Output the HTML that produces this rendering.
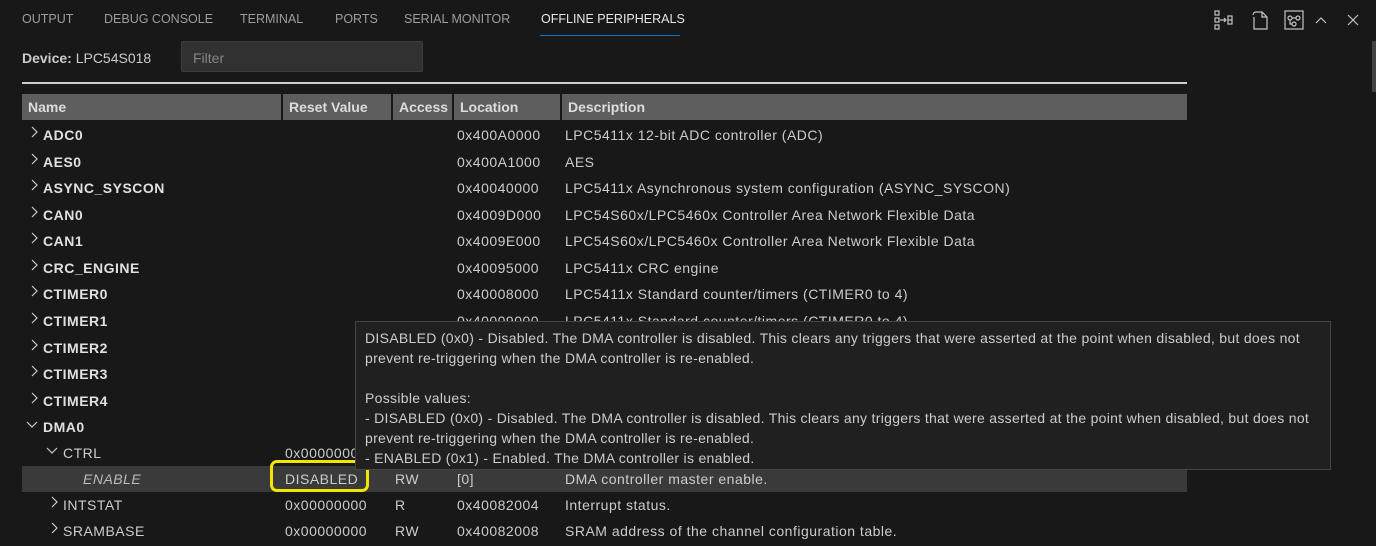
<!DOCTYPE html>
<html><head><meta charset="utf-8"><style>
body{margin:0;width:1376px;height:546px;background:#181818;color:#ccc;font-family:"Liberation Sans",sans-serif;font-size:14px;overflow:hidden;position:relative}
.tabs{position:absolute;top:0;left:0;height:38px;font-size:12.5px;color:#9d9d9d}
.tab{position:absolute;top:12px;white-space:nowrap}
.act{color:#e7e7e7}
.ul{position:absolute;left:540px;top:35px;width:140px;height:1px;background:#0078d4}
.dev{position:absolute;left:22px;top:50px;color:#ccc}
.filter{position:absolute;left:181px;top:41px;width:242px;height:31px;background:#313131;border:1px solid #3c3c3c;box-sizing:border-box;border-radius:2px;color:#868686;padding:8px 11px;font-size:14px}
.hr{position:absolute;left:22px;top:82px;width:1165px;height:2px;background:#cfcfcf}
.hdr{position:absolute;left:22px;top:94px;width:1165px;height:26px;background:#5e5e5e}
.hdr div{position:absolute;top:0;height:26px;line-height:26px;font-weight:bold;color:#ddd;border-right:2px solid #181818;padding-left:6px;box-sizing:border-box}
.row{position:absolute;left:22px;width:1165px;height:26px;line-height:26px;letter-spacing:0.5px}
.row span{position:absolute;white-space:nowrap}
.n{font-weight:bold;color:#e0e0e0}
.row svg{position:absolute;top:4px}
.tip{position:absolute;left:355px;top:321px;width:976px;height:149px;background:#202020;border:1px solid #454545;box-sizing:border-box;padding:6px 9px;line-height:20px;color:#ccc;font-size:14px;letter-spacing:0.3px}
.sb{position:absolute;left:1372px;top:41px;width:4px;height:51px;background:#424242}
</style></head><body>
<div class="tabs">
<span class="tab" style="left:22px">OUTPUT</span>
<span class="tab" style="left:104px">DEBUG CONSOLE</span>
<span class="tab" style="left:240px">TERMINAL</span>
<span class="tab" style="left:335px">PORTS</span>
<span class="tab" style="left:404px">SERIAL MONITOR</span>
<span class="tab act" style="left:541px">OFFLINE PERIPHERALS</span>
</div>
<div class="ul"></div>
<svg style="position:absolute;left:1212px;top:8px" width="160" height="24" fill="none" stroke="#c5c5c5" stroke-width="1.2">
<rect x="3" y="3" width="4" height="4"/><rect x="3" y="10" width="4" height="4"/><rect x="3" y="17" width="4" height="4"/><path d="M8 12h6M12 10l2 2-2 2"/><rect x="16" y="8" width="4" height="8"/><path d="M16 12h4"/>
<path d="M44 4h6l5 5v12H42V9"/><path d="M50 4v5h5"/><path d="M44 4a3 3 0 0 0-3 3"/>
<rect x="73" y="3" width="18" height="18"/><circle cx="78" cy="10" r="2"/><circle cx="86" cy="10" r="2"/><circle cx="82" cy="16" r="2"/><path d="M80 10h4M78 12v4h2"/>
<path d="M104 15l5-5 5 5"/>
<path d="M136 7l10 10M146 7l-10 10"/>
</svg>
<div class="sb"></div>
<div class="dev"><b>Device:</b> LPC54S018</div>
<div class="filter">Filter</div>
<div class="hr"></div>
<div class="hdr">
<div style="left:0;width:261px">Name</div>
<div style="left:261px;width:110px">Reset Value</div>
<div style="left:371px;width:61px">Access</div>
<div style="left:432px;width:108px">Location</div>
<div style="left:540px;width:625px;border:none">Description</div>
</div>
<svg width="0" height="0" style="position:absolute"><defs>
<symbol id="r" viewBox="0 0 12 12"><path d="M4 1l5 5-5 5" fill="none" stroke="#ccc" stroke-width="1.2"/></symbol>
<symbol id="d" viewBox="0 0 12 12"><path d="M1 4l5 5 5-5" fill="none" stroke="#ccc" stroke-width="1.2"/></symbol>
</defs></svg>
<div class="row" style="top:122px"><svg style="left:6px" width="12" height="12"><use href="#r"/></svg><span class="n" style="left:21px">ADC0</span><span style="left:435px">0x400A0000</span><span style="left:543px">LPC5411x 12-bit ADC controller (ADC)</span></div>
<div class="row" style="top:149px"><svg style="left:6px" width="12" height="12"><use href="#r"/></svg><span class="n" style="left:21px">AES0</span><span style="left:435px">0x400A1000</span><span style="left:543px">AES</span></div>
<div class="row" style="top:175px"><svg style="left:6px" width="12" height="12"><use href="#r"/></svg><span class="n" style="left:21px">ASYNC_SYSCON</span><span style="left:435px">0x40040000</span><span style="left:543px">LPC5411x Asynchronous system configuration (ASYNC_SYSCON)</span></div>
<div class="row" style="top:202px"><svg style="left:6px" width="12" height="12"><use href="#r"/></svg><span class="n" style="left:21px">CAN0</span><span style="left:435px">0x4009D000</span><span style="left:543px">LPC54S60x/LPC5460x Controller Area Network Flexible Data</span></div>
<div class="row" style="top:228px"><svg style="left:6px" width="12" height="12"><use href="#r"/></svg><span class="n" style="left:21px">CAN1</span><span style="left:435px">0x4009E000</span><span style="left:543px">LPC54S60x/LPC5460x Controller Area Network Flexible Data</span></div>
<div class="row" style="top:255px"><svg style="left:6px" width="12" height="12"><use href="#r"/></svg><span class="n" style="left:21px">CRC_ENGINE</span><span style="left:435px">0x40095000</span><span style="left:543px">LPC5411x CRC engine</span></div>
<div class="row" style="top:281px"><svg style="left:6px" width="12" height="12"><use href="#r"/></svg><span class="n" style="left:21px">CTIMER0</span><span style="left:435px">0x40008000</span><span style="left:543px">LPC5411x Standard counter/timers (CTIMER0 to 4)</span></div>
<div class="row" style="top:308px"><svg style="left:6px" width="12" height="12"><use href="#r"/></svg><span class="n" style="left:21px">CTIMER1</span><span style="left:435px">0x40009000</span><span style="left:543px">LPC5411x Standard counter/timers (CTIMER0 to 4)</span></div>
<div class="row" style="top:335px"><svg style="left:6px" width="12" height="12"><use href="#r"/></svg><span class="n" style="left:21px">CTIMER2</span></div>
<div class="row" style="top:361px"><svg style="left:6px" width="12" height="12"><use href="#r"/></svg><span class="n" style="left:21px">CTIMER3</span></div>
<div class="row" style="top:388px"><svg style="left:6px" width="12" height="12"><use href="#r"/></svg><span class="n" style="left:21px">CTIMER4</span></div>
<div class="row" style="top:414px"><svg style="left:4px" width="12" height="12"><use href="#d"/></svg><span class="n" style="left:21px">DMA0</span></div>
<div class="row" style="top:440px"><svg style="left:24px" width="12" height="12"><use href="#d"/></svg><span style="left:41px">CTRL</span><span style="left:263px">0x00000000</span></div>
<div class="row" style="top:466px;background:#3a3a3a"><span style="left:61px;font-style:italic;color:#bbb">ENABLE</span><span style="left:263px">DISABLED</span><span style="left:373px">RW</span><span style="left:435px">[0]</span><span style="left:543px">DMA controller master enable.</span></div>
<div class="row" style="top:492px"><svg style="left:26px" width="12" height="12"><use href="#r"/></svg><span style="left:41px">INTSTAT</span><span style="left:263px">0x00000000</span><span style="left:373px">R</span><span style="left:435px">0x40082004</span><span style="left:543px">Interrupt status.</span></div>
<div class="row" style="top:518px"><svg style="left:26px" width="12" height="12"><use href="#r"/></svg><span style="left:41px">SRAMBASE</span><span style="left:263px">0x00000000</span><span style="left:373px">RW</span><span style="left:435px">0x40082008</span><span style="left:543px">SRAM address of the channel configuration table.</span></div>
<div style="position:absolute;left:270px;top:460px;width:99px;height:32px;border:3px solid #f2e600;border-radius:7px;box-sizing:border-box"></div>
<div class="tip">DISABLED (0x0) - Disabled. The DMA controller is disabled. This clears any triggers that were asserted at the point when disabled, but does not prevent re-triggering when the DMA controller is re-enabled.<br><br>Possible values:<br>- DISABLED (0x0) - Disabled. The DMA controller is disabled. This clears any triggers that were asserted at the point when disabled, but does not prevent re-triggering when the DMA controller is re-enabled.<br>- ENABLED (0x1) - Enabled. The DMA controller is enabled.</div>
</body></html>
